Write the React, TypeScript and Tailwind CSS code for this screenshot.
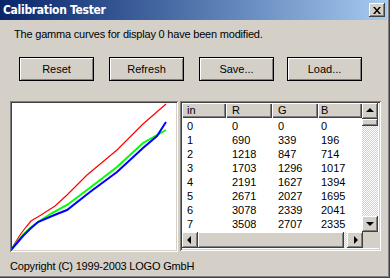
import React from "react";

const raised =
  "shadow-[inset_-1px_-1px_0_#404040,inset_1px_1px_0_#ffffff,inset_-2px_-2px_0_#808080,inset_2px_2px_0_#d4d0c8]";
const sunken =
  "shadow-[inset_1px_1px_0_#808080,inset_-1px_-1px_0_#ffffff,inset_2px_2px_0_#404040,inset_-2px_-2px_0_#d4d0c8]";
const checker =
  "bg-[repeating-conic-gradient(#d4d0c8_0_25%,#ffffff_0_50%)] bg-[length:2px_2px]";

const rows = [
  ["0", "0", "0", "0"],
  ["1", "690", "339", "196"],
  ["2", "1218", "847", "714"],
  ["3", "1703", "1296", "1017"],
  ["4", "2191", "1627", "1394"],
  ["5", "2671", "2027", "1695"],
  ["6", "3078", "2339", "2041"],
  ["7", "3508", "2707", "2335"],
];

function Btn({ label, className }: { label: string; className?: string }) {
  return (
    <div
      className={`w-[75px] h-[24px] border border-black flex items-center justify-center shadow-[inset_1px_1px_0_#ffffff,inset_-1px_-1px_0_#808080] text-black ${className ?? ""}`}
    >
      {label}
    </div>
  );
}

function Arrow({ dir }: { dir: "up" | "down" | "left" | "right" }) {
  const pts =
    dir === "up"
      ? "4,9 8,5 12,9"
      : dir === "down"
      ? "4,6 8,10 12,6"
      : dir === "left"
      ? "9,4 5,8 9,12"
      : "7,4 11,8 7,12";
  return (
    <div className={`w-[16px] h-[16px] bg-[#d4d0c8] ${raised} shrink-0`}>
      <svg width="16" height="16" viewBox="0 0 16 16">
        <polygon points={pts} fill="#000" />
      </svg>
    </div>
  );
}

const red = "11,250 15,243 20,235 26,227 31,221 36,218 41,215 55,206 67,195 87,175 117,150 143,124 166,104";
const green = "11,250 17,242 23,235 30,228 38,222 52,213 67,205 87,190 117,167 143,143 166,130";
const blue = "11,250 17,243 23,236 30,229 38,222 52,216 67,210 90,192 117,172 143,148 157,136 166,122";

export default function App() {
  return (
    <div
      className="relative w-[390px] h-[278px] bg-[#d4d0c8] flex flex-col text-[11px] text-black shadow-[inset_-1px_-1px_0_#404040,inset_-2px_-2px_0_#808080] overflow-hidden"
      style={{ fontFamily: '"Liberation Sans", Arial, sans-serif' }}
    >
      <div className="w-[387px] h-[20px] bg-linear-to-r from-[#0a246a] to-[#a6caf0] flex items-center justify-between pl-[3px] pr-[2px]">
        <span
          className="text-white font-bold text-[12px] leading-none tracking-[-0.3px]"
          style={{ fontFamily: 'Tahoma, "DejaVu Sans Condensed", "Liberation Sans", sans-serif' }}
        >
          Calibration Tester
        </span>
        <div className={`w-[16px] h-[14px] bg-[#d4d0c8] ${raised} flex items-center justify-center`}>
          <svg width="8" height="7" viewBox="0 0 8 7">
            <path d="M0 0h2l2 2.5 2-2.5h2L5 3.5 8 7H6L4 4.5 2 7H0l3-3.5z" fill="#000" />
          </svg>
        </div>
      </div>

      <div className="pl-[14px] mt-[8px] leading-[12px] h-[12px] tracking-[-0.2px]">
        The gamma curves for display 0 have been modified.
      </div>

      <div className="flex mt-[17px] pl-[19px]">
        <Btn label="Reset" />
        <Btn label="Refresh" className="ml-[15px]" />
        <Btn label="Save..." className="ml-[15px]" />
        <Btn label="Load..." className="ml-[13px]" />
      </div>

      <div className="flex mt-[20px] pl-[10px] items-start">
        <div className={`w-[168px] h-[151px] bg-white ${sunken} p-[2px]`}>
          <svg width="164" height="147" viewBox="12 103 164 147" className="block">
            <polyline points={red} fill="none" stroke="#ff0000" strokeWidth="1.2" />
            <polyline points={green} fill="none" stroke="#00ff00" strokeWidth="2" />
            <polyline points={blue} fill="none" stroke="#0000ff" strokeWidth="2" />
          </svg>
        </div>

        <div className={`ml-[2px] w-[201px] h-[150px] bg-white ${sunken} p-[2px] flex flex-col`}>
          <div className="flex h-[129px]">
            <div className="w-[180px] flex flex-col">
              <div className="flex h-[15px] bg-[#d4d0c8]">
                {["in", "R", "G", "B"].map((h, i) => (
                  <div
                    key={h}
                    className={`${i === 3 ? "flex-1" : i === 0 ? "w-[44px]" : "w-[46px]"} h-[15px] leading-[14px] ${
                      i === 0 ? "pl-[5px]" : i === 3 ? "pl-[3px]" : "pl-[6px]"
                    } shadow-[inset_1px_1px_0_#ffffff,inset_-1px_-1px_0_#404040,inset_-2px_-2px_0_#808080]`}
                  >
                    {h}
                  </div>
                ))}
              </div>
              <div className="flex flex-col pt-[1px]">
                {rows.map((r) => (
                  <div key={r[0]} className="flex h-[14px] leading-[14px]">
                    <div className="w-[44px] pl-[5px]">{r[0]}</div>
                    <div className="w-[46px] pl-[6px]">{r[1]}</div>
                    <div className="w-[46px] pl-[6px]">{r[2]}</div>
                    <div className="flex-1 pl-[3px]">{r[3]}</div>
                  </div>
                ))}
              </div>
            </div>
            <div className="w-[16px] flex flex-col">
              <Arrow dir="up" />
              <div className={`h-[7px] bg-[#d4d0c8] ${raised}`} />
              <div className={`flex-1 ${checker}`} />
              <Arrow dir="down" />
            </div>
          </div>
          <div className="flex h-[16px]">
            <Arrow dir="left" />
            <div className={`w-[146px] bg-[#d4d0c8] ${raised}`} />
            <div className={`flex-1 ${checker}`} />
            <Arrow dir="right" />
            <div className="w-[16px] bg-[#d4d0c8]" />
          </div>
        </div>
      </div>

      <div className="pl-[10px] mt-[8px] leading-[12px] tracking-[-0.2px]">Copyright (C) 1999-2003 LOGO GmbH</div>
    </div>
  );
}
